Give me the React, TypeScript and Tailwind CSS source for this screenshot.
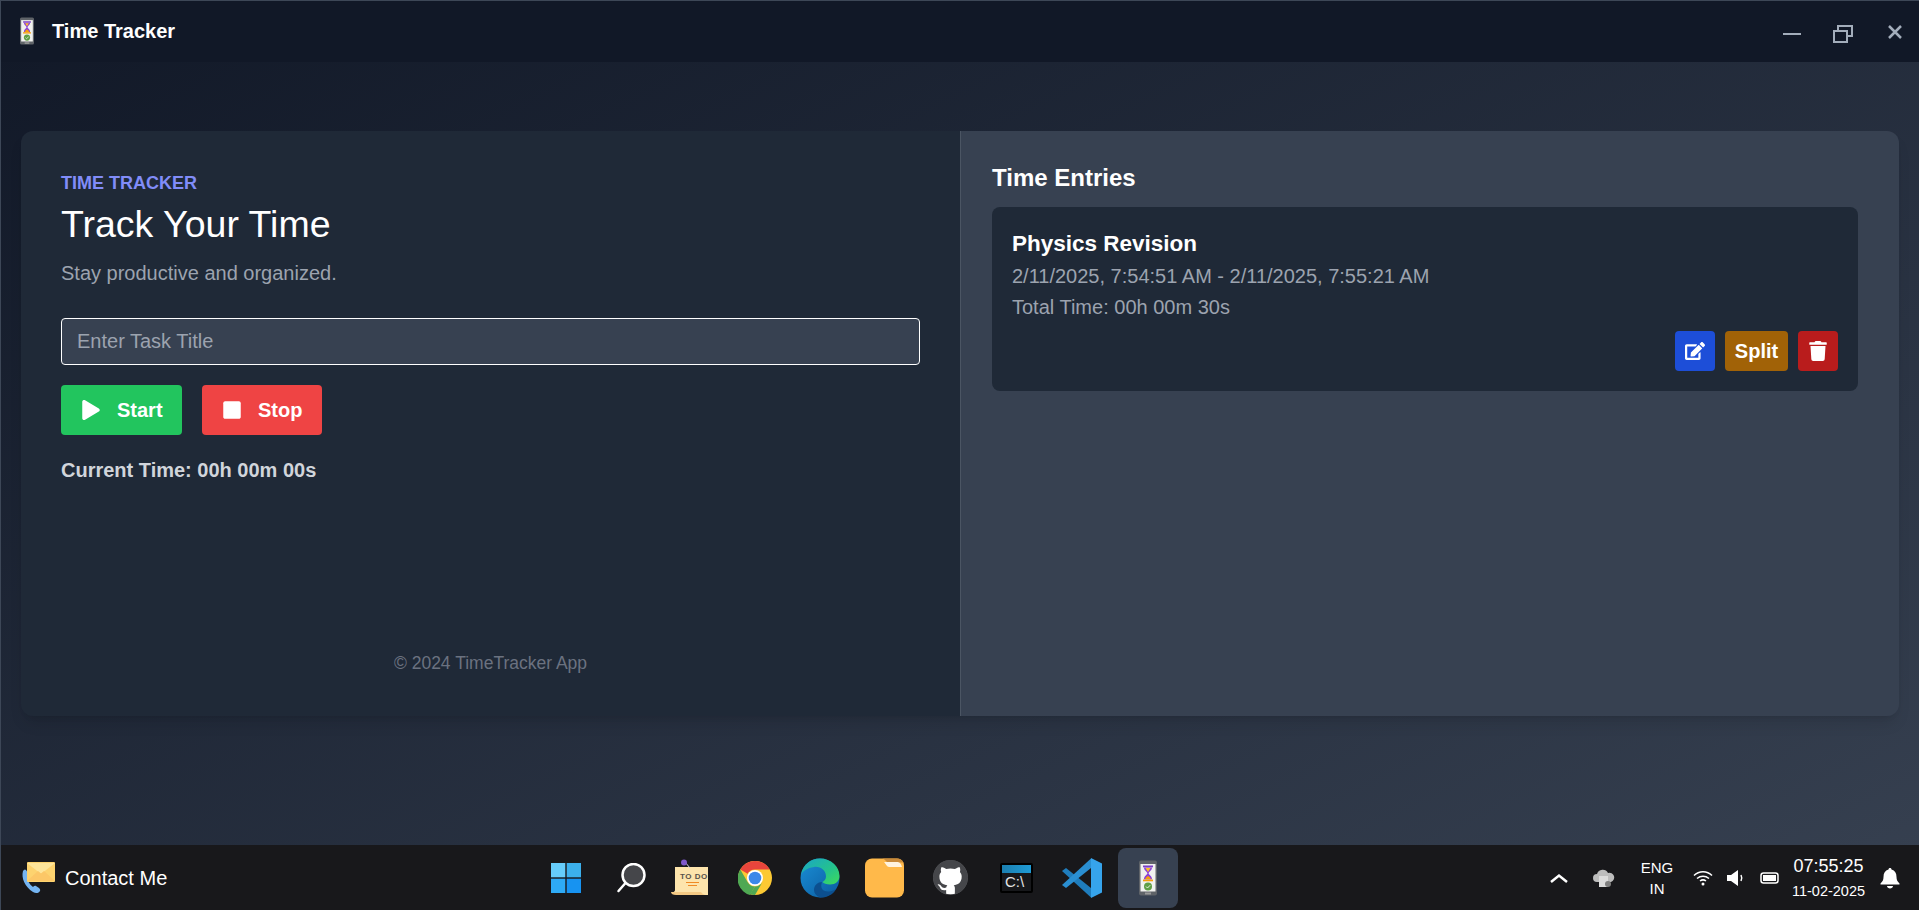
import { FaEdit, FaPlay, FaStop, FaTrash } from "react-icons/fa";

function PhoneGlass({ className }: { className?: string }) {
  return (
    <svg viewBox="0 0 20 36" className={className} aria-hidden>
      <rect x="1" y="0.5" width="18" height="35" rx="2" fill="#5f6368" />
      <rect x="2.5" y="4" width="15" height="27.5" fill="#f1f1ee" />
      <rect x="7" y="32.5" width="6" height="2" fill="#9a9a9a" />
      <rect x="5" y="5.5" width="10" height="1.8" fill="#7b3fc4" />
      <rect x="5" y="19.5" width="10" height="1.8" fill="#f59e0b" />
      <path d="M6 7.5h8c0 3-3 4-3.4 5.8.4 1.8 3.4 2.6 3.4 6H6c0-3.4 3-4.2 3.4-6C9 11.500 6 10.500 6 7.500z" fill="#8b3fd9" />
      <path d="M7.500 8h5l-2.500 4z" fill="#fbbf24" />
      <path d="M7 19.200c.8-2 2-2.400 3-3.400 1 1 2.200 1.400 3 3.400z" fill="#f59e0b" />
      <circle cx="10" cy="26.500" r="4" fill="#5f9e45" />
      <path d="M8 26.500l1.500 1.500 2.700-2.800" stroke="#e7f3df" strokeWidth="1" fill="none" />
    </svg>
  );
}

function TitleBar() {
  return (
    <header className="flex h-[61px] shrink-0 items-center justify-between pl-[18px] pr-[17px] bg-[#111827]">
      <div className="flex items-center gap-[17px] -mt-[1px]">
        <PhoneGlass className="h-7 w-4" />
        <span className="text-xl font-bold text-white">Time Tracker</span>
      </div>
      <div className="flex items-center text-[#a3adbb]">
        <svg viewBox="0 0 18 18" className="mt-1 h-[18px] w-[18px]" aria-hidden>
          <path d="M0 9h18" stroke="currentColor" strokeWidth="2" />
        </svg>
        <svg viewBox="0 0 20 20" className="ml-8 mt-1 h-5 w-5" aria-hidden>
          <path d="M5 6V2h14v10h-5" stroke="currentColor" strokeWidth="2" fill="none" />
          <rect x="1" y="7" width="13" height="11" stroke="currentColor" strokeWidth="2" fill="none" />
        </svg>
        <svg viewBox="0 0 14 14" className="ml-[35px] h-[14px] w-[14px]" aria-hidden>
          <path d="M1 1l12 12M13 1L1 13" stroke="currentColor" strokeWidth="2.500" />
        </svg>
      </div>
    </header>
  );
}

function TrackerPanel() {
  return (
    <section className="flex w-1/2 flex-col bg-[#1f2937] pl-10 pr-10 pt-[41px] pb-[39px]">
      <p className="text-lg font-bold uppercase leading-[22px] text-[#818cf8]">Time Tracker</p>
      <h1 className="mt-[10px] text-[37.5px] leading-[40px] text-white">Track Your Time</h1>
      <p className="mt-[15px] text-xl leading-7 text-[#9ca3af]">Stay productive and organized.</p>
      <input
        placeholder="Enter Task Title"
        className="mt-[31px] h-[47px] w-full rounded border border-white bg-[#374151] px-[15px] text-xl text-white outline-none placeholder:text-[#9ca3af]"
      />
      <div className="mt-5 flex gap-5">
        <button type="button" className="flex h-[50px] w-[121px] items-center gap-4 rounded bg-[#22c55e] pl-5 text-xl font-bold text-white">
          <FaPlay className="h-5 w-5" />
          Start
        </button>
        <button type="button" className="flex h-[50px] w-[120px] items-center gap-[16px] rounded bg-[#ef4444] pl-5 text-xl font-bold text-white">
          <FaStop className="h-5 w-5" />
          Stop
        </button>
      </div>
      <p className="mt-[21px] text-xl font-bold leading-7 text-[#d1d5db]">Current Time: 00h 00m 00s</p>
      <p className="mt-auto text-center text-[17.5px] leading-7 text-[#6b7280]">© 2024 TimeTracker App</p>
    </section>
  );
}

function EntriesPanel() {
  return (
    <section className="w-1/2 border-l border-[#4b5563] bg-[#374151] pl-[31px] pr-[41px] pt-[33px]">
      <h2 className="text-2xl font-bold leading-7 text-white">Time Entries</h2>
      <div className="mt-[15px] rounded-lg bg-[#1f2937] px-5 pt-[23px] pb-5">
        <h3 className="text-[22.5px] font-bold leading-7 text-white">Physics Revision</h3>
        <p className="mt-[4px] text-xl leading-7 text-[#9ca3af]">2/11/2025, 7:54:51 AM - 2/11/2025, 7:55:21 AM</p>
        <p className="mt-[3px] text-xl leading-7 text-[#9ca3af]">Total Time: 00h 00m 30s</p>
        <div className="mt-[10px] flex justify-end gap-[10px]">
          <button type="button" className="flex h-10 w-10 items-center justify-center rounded bg-[#1d4ed8] text-white">
            <FaEdit className="h-[18px] w-[20px]" />
          </button>
          <button type="button" className="h-10 w-[63px] rounded bg-[#a16207] text-xl font-bold text-white">
            Split
          </button>
          <button type="button" className="flex h-10 w-10 items-center justify-center rounded bg-[#b91c1c] text-white">
            <FaTrash className="h-[20px] w-[18px]" />
          </button>
        </div>
      </div>
    </section>
  );
}

function ContactIcon() {
  return (
    <svg viewBox="0 0 36 36" className="h-[36px] w-[36px]" aria-hidden>
      <path d="M3 11c-2 7 2 16 10 21 3 2 6 1 7-1 .5-1 0-2-1-3l-3-2c-1-.5-2 0-3 1-3-2-6-7-6-11 1-1 1.500-2 1-3L6 10c-1-1-2-.5-3 1z" fill="#74b4f2" />
      <rect x="7" y="2" width="28" height="20" rx="1" fill="#fdd36f" />
      <path d="M7 3l14 11L35 3" fill="#fee59a" />
      <path d="M7 21l11-10 3 2.500 3-2.500 11 10" fill="#fcc767" />
    </svg>
  );
}

function StartIcon() {
  return (
    <svg viewBox="0 0 30 30" className="h-[30px] w-[30px]" aria-hidden>
      <rect x="0" y="0" width="14.300" height="14.300" fill="#66cdfb" />
      <rect x="15.700" y="0" width="14.300" height="14.300" fill="#3cb0ec" />
      <rect x="0" y="15.700" width="14.300" height="14.300" fill="#2eaaf5" />
      <rect x="15.700" y="15.700" width="14.300" height="14.300" fill="#1793f1" />
    </svg>
  );
}

function SearchIcon() {
  return (
    <svg viewBox="0 0 30 30" className="h-[30px] w-[30px]" aria-hidden>
      <circle cx="17.500" cy="12" r="11" fill="#45464a" stroke="#fff" strokeWidth="2.500" />
      <path d="M9.500 20L2.500 28" stroke="#fff" strokeWidth="2.500" strokeLinecap="round" />
    </svg>
  );
}

function TodoIcon() {
  return (
    <svg viewBox="0 0 40 38" className="h-[38px] w-10" aria-hidden>
      <path d="M5 8h33v28H6c2 0 3-1 3-2H1c1 0 4-1 4-3z" fill="#fde4ac" />
      <path d="M1 33h30c1 1 2 3 6 3H6C3 36 1 35 1 33z" fill="#f4c984" />
      <path d="M15 3l5 6" stroke="#d1cfe0" strokeWidth="1" />
      <circle cx="14" cy="3.500" r="3" fill="#7e57c9" />
      <text x="10" y="20" fontFamily="'Liberation Sans', sans-serif" fontSize="8" fill="#59524a" fontWeight="700" letterSpacing="0.500">TO DO</text>
      <path d="M16 23.500h13M18 26.500h9" stroke="#f08a24" strokeWidth="1" />
    </svg>
  );
}

function ChromeIcon() {
  return (
    <svg viewBox="0 0 34 34" className="h-[34px] w-[34px]" aria-hidden>
      <circle cx="17" cy="17" r="17" fill="#fcc934" />
      <path d="M17 0a17 17 0 0 1 14.700 8.500H17a8.500 8.500 0 0 0-7.400 4.300L2.300 8.500A17 17 0 0 1 17 0z" fill="#e8453c" />
      <path d="M2.300 8.500l7.400 12.800a8.500 8.500 0 0 0 7.300 4.200L12 34A17 17 0 0 1 2.300 8.500z" fill="#4fa853" />
      <path d="M12 33.300l5-7.800c3 0 5.900-1.600 7.400-4.200L17 34c-1.700 0-3.400-.2-5-.7z" fill="#4fa853" />
      <circle cx="17" cy="17" r="8" fill="#fff" />
      <circle cx="17" cy="17" r="6.300" fill="#3b88e8" />
    </svg>
  );
}

function EdgeIcon() {
  return (
    <svg viewBox="0 0 40 40" className="h-10 w-10" aria-hidden>
      <defs>
        <linearGradient id="edgeTop" x1="0" y1="0" x2="1" y2="1">
          <stop offset="0" stopColor="#1aa5c8" />
          <stop offset="0.600" stopColor="#25c48a" />
          <stop offset="1" stopColor="#3fdc5a" />
        </linearGradient>
        <linearGradient id="edgeLow" x1="0" y1="0" x2="1" y2="1">
          <stop offset="0" stopColor="#1a8fd6" />
          <stop offset="1" stopColor="#0b5a9e" />
        </linearGradient>
      </defs>
      <circle cx="20" cy="20" r="19.500" fill="url(#edgeLow)" />
      <path d="M1 17C3 6 11 .5 20 .5c11 0 19.500 8 19.500 17.500 0 5-4 8.500-9.500 8.500-3.500 0-6.500-1-7.500-2.500 2-1 3.500-3 3.500-5.500C26 12 20 8 14 9 7 10 2.500 13 1 17z" fill="url(#edgeTop)" />
      <path d="M22 24c-4 0-8 3-8 8 0 3 2 6 6 7.500 6 .5 13-2.500 16-8.500-3 2-6 2.500-8 2.500-6 0-8-4-6-9.500z" fill="#0c4f8f" />
    </svg>
  );
}

function FilesIcon() {
  return (
    <svg viewBox="0 0 40 40" className="h-10 w-10" aria-hidden>
      <rect x="0" y="0.500" width="39" height="39" rx="7" fill="#ffb94a" />
      <path d="M7 .5h10c3 0 4 4 7 4h15V8c0-5-3-7.500-7-7.500z" fill="#c98a3a" />
      <path d="M19 4h13c2 0 4 1 5 5H24c-2 0-3-3-5-5z" fill="#fff3df" />
    </svg>
  );
}

function GithubIcon() {
  return (
    <svg viewBox="0 0 16 16" className="h-[35px] w-[35px]" aria-hidden>
      <circle cx="8" cy="8" r="8" fill="#45464a" />
      <circle cx="8" cy="8" r="7.700" fill="#fff" />
      <path
        fill="#45464a"
        d="M8 0C3.58 0 0 3.58 0 8c0 3.54 2.29 6.53 5.47 7.59.4.07.55-.17.55-.38 0-.19-.01-.82-.01-1.49-2.01.37-2.53-.49-2.69-.94-.09-.23-.48-.94-.82-1.13-.28-.15-.68-.52-.01-.53.63-.01 1.08.58 1.23.82.72 1.21 1.87.87 2.33.66.07-.52.28-.87.51-1.07-1.78-.2-3.64-.89-3.64-3.95 0-.87.31-1.59.82-2.15-.08-.2-.36-1.02.08-2.12 0 0 .67-.21 2.2.82.64-.18 1.32-.27 2-.27.68 0 1.36.09 2 .27 1.53-1.04 2.2-.82 2.2-.82.44 1.1.16 1.92.08 2.12.51.56.82 1.27.82 2.15 0 3.07-1.87 3.75-3.65 3.95.29.25.54.73.54 1.48 0 1.07-.01 1.93-.01 2.2 0 .21.15.46.55.38A8.013 8.013 0 0016 8c0-4.420-3.580-8-8-8z"
      />
    </svg>
  );
}

function CmdIcon() {
  return (
    <div className="flex h-[30px] w-[33px] flex-col overflow-hidden rounded-[2px] border-2 border-black bg-[#17181b]">
      <div className="h-[8px] bg-gradient-to-r from-[#1b7fb0] to-[#1f9bd6]" />
      <span className="pl-[3px] text-[15px] leading-[18px] text-[#e5e5e5]">C:\</span>
    </div>
  );
}

function VsCodeIcon() {
  return (
    <svg viewBox="0 0 42 42" className="h-[42px] w-[42px]" aria-hidden>
      <path d="M1 14l4-3 25 20v9.500z" fill="#1f7dbd" />
      <path d="M1 28l4 3 25-20V1.500z" fill="#2a8fd2" />
      <path d="M30 1l11 5.500v29L30 41z" fill="#36a4ec" />
    </svg>
  );
}

function TrayIcons() {
  return (
    <div className="flex items-center">
      <svg viewBox="0 0 18 10" className="h-[10px] w-[18px]" aria-hidden>
        <path d="M1 9l8-6.500L17 9" stroke="#fff" strokeWidth="2.500" fill="none" />
      </svg>
      <svg viewBox="0 0 24 20" className="ml-[24px] h-5 w-6" aria-hidden>
        <path d="M5 14a4 4 0 0 1 0-8 6 6 0 0 1 11-1 4.500 4.500 0 0 1 3 9z" fill="#bdbdbd" />
        <rect x="7" y="8" width="9" height="11" fill="#dcdcdc" />
        <circle cx="16" cy="16" r="3" fill="#7f7f7f" />
      </svg>
      <div className="ml-[25px] flex w-8 flex-col items-center text-[15px] leading-[21px] text-white">
        <span>ENG</span>
        <span>IN</span>
      </div>
      <svg viewBox="0 0 20 16" className="ml-[20px] h-4 w-5" aria-hidden>
        <path d="M1 5.500c5-5 13-5 18 0M4 8.500c3.500-3 8.500-3 12 0M7 11c2-1.500 4-1.500 6 0" stroke="#fff" strokeWidth="1.500" fill="none" />
        <circle cx="10" cy="14" r="1.500" fill="#fff" />
      </svg>
      <svg viewBox="0 0 18 16" className="ml-[14px] h-4 w-[18px]" aria-hidden>
        <path d="M0 5h4l7-5v16l-7-5H0z" fill="#fff" />
        <path d="M14 5c1 2 1 4 0 6" stroke="#fff" strokeWidth="1.500" fill="none" />
      </svg>
      <svg viewBox="0 0 20 12" className="ml-[15px] h-3 w-5" aria-hidden>
        <rect x="1" y="1" width="17" height="10" rx="2.500" stroke="#fff" strokeWidth="1.500" fill="none" />
        <rect x="3" y="3" width="13" height="6" fill="#fff" />
      </svg>
    </div>
  );
}

const APP_CELL = "flex w-[65px] shrink-0 items-center justify-center";

function Taskbar() {
  return (
    <footer className="flex h-[65px] shrink-0 items-center bg-[#18181b] pl-[19px] pr-[19px]">
      <div className="flex w-[513px] shrink-0 items-center gap-[9px] text-xl text-white">
        <ContactIcon />
        <span>Contact Me</span>
      </div>
      <div className="flex h-[60px] items-center">
        <div className={APP_CELL}><StartIcon /></div>
        <div className={APP_CELL}><SearchIcon /></div>
        <div className={`${APP_CELL} -ml-[6px]`}><TodoIcon /></div>
        <div className={APP_CELL}><ChromeIcon /></div>
        <div className={APP_CELL}><EdgeIcon /></div>
        <div className={APP_CELL}><FilesIcon /></div>
        <div className={`${APP_CELL} ml-px`}><GithubIcon /></div>
        <div className={`${APP_CELL} ml-px`}><CmdIcon /></div>
        <div className={APP_CELL}><VsCodeIcon /></div>
        <div className={`${APP_CELL} ml-px`}>
          <div className="flex h-[60px] w-[60px] items-center justify-center rounded-lg bg-[#374151]">
            <PhoneGlass className="h-9 w-5" />
          </div>
        </div>
      </div>
      <div className="ml-auto flex items-center">
        <TrayIcons />
        <div className="ml-[11px] flex w-[75px] flex-col items-center whitespace-nowrap text-white">
          <span className="text-lg leading-[26px]">07:55:25</span>
          <span className="text-[14.5px] leading-[24px]">11-02-2025</span>
        </div>
        <svg viewBox="0 0 20 22" className="ml-[14px] h-[22px] w-5" aria-hidden>
          <path d="M10 1c1 0 1.500.7 1.500 1.500C15 3.500 16.500 6 16.500 10c0 3 1 4.500 3 6.500v1H.5v-1c2-2 3-3.500 3-6.500 0-4 1.500-6.500 5-7.500C8.500 1.700 9 1 10 1z" fill="#fff" />
          <path d="M7 19h6c0 1.500-1.500 2.500-3 2.500S7 20.500 7 19z" fill="#fff" />
        </svg>
      </div>
    </footer>
  );
}

export default function App() {
  return (
    <div className="relative flex h-[910px] flex-col overflow-hidden border-l border-t border-[#3d4757] bg-gradient-to-br from-[#111827] to-[#374151] font-['Liberation_Sans',Arial,sans-serif]">
      <TitleBar />
      <main className="flex-1 px-5 pt-[69px]">
        <div className="flex h-[585px] overflow-hidden rounded-xl shadow-lg">
          <TrackerPanel />
          <EntriesPanel />
        </div>
      </main>
      <Taskbar />
    </div>
  );
}
